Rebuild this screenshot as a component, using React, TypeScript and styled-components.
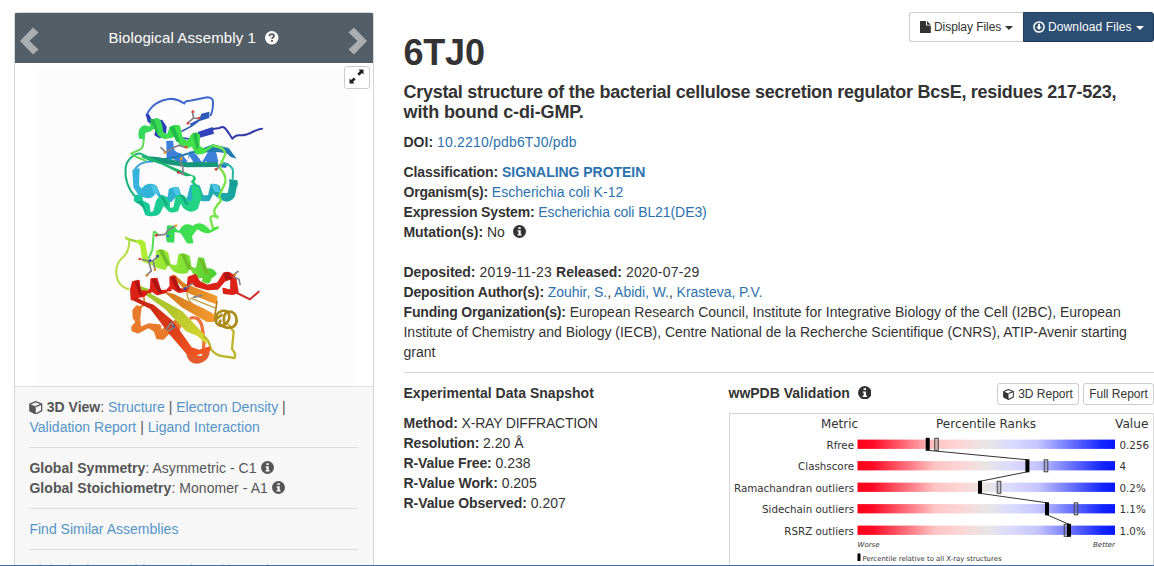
import React from 'react';
import styled, { createGlobalStyle } from 'styled-components';

const Global = createGlobalStyle`
  * { box-sizing: border-box; }
  html, body { margin: 0; padding: 0; }
  body {
    background: #fff;
    color: #333;
    font: 14px/20px "Liberation Sans", Arial, sans-serif;
    overflow: hidden;
  }
  svg { display: block; }
`;

const Page = styled.div`
  display: flex;
  width: 1154px;
  height: 566px;
  overflow: hidden;
  border-bottom: 1px solid #3f73a6;
`;

const Panel = styled.section`
  width: 360px;
  height: 640px;
  margin: 12px 0 0 14px;
  flex: none;
  border: 1px solid #d5d5d5;
  border-radius: 4px 4px 0 0;
`;

const PanelHeader = styled.header`
  display: flex;
  align-items: center;
  justify-content: space-between;
  height: 50px;
  padding: 0 6px 0 5px;
  background: #545e66;
  color: #fff;
`;

const PanelTitle = styled.div`
  display: flex;
  align-items: center;
  gap: 9px;
  font-size: 15px;
  letter-spacing: 0.12px;
`;

const ArrowButton = styled.span`
  padding-top: 6px;
`;

const Figure = styled.div`
  position: relative;
  height: 323px;
  padding: 5px 0 0 20px;
`;

const ExpandButton = styled.span`
  position: absolute;
  top: 3px;
  right: 3px;
  width: 26px;
  height: 23px;
  display: grid;
  place-items: center;
  background: #fff;
  border: 1px solid #ccc;
  border-radius: 3px;
`;

const PanelFooter = styled.footer`
  height: 265px;
  padding: 10px 15px 10px 14.4px;
  border-top: 1px solid #ddd;
  background: #f7f7f7;
  color: #555;
`;

const PanelRule = styled.hr`
  height: 1px;
  margin: 10px 0;
  border: 0;
  background: #ddd;
`;

const Line = styled.div<{ $faint?: boolean; $track?: number }>`
  white-space: nowrap;
  letter-spacing: ${(p) => p.$track ?? 0}px;
  ${(p) => p.$faint && 'color: #c4c4c4;'}
`;

const Label = styled.strong<{ $track?: number }>`
  letter-spacing: ${(p) => p.$track ?? 0}px;
`;

const Link = styled.a<{ $soft?: boolean; $track?: number }>`
  color: ${(p) => (p.$soft ? '#5594c8' : '#2d72ae')};
  text-decoration: none;
  ${(p) => p.$track !== undefined && `letter-spacing: ${p.$track}px;`}
`;

const Inline = styled.span<{ $gap?: number; $lift?: number }>`
  display: inline-block;
  vertical-align: ${(p) => p.$lift ?? -1}px;
  margin-left: ${(p) => p.$gap ?? 0}px;
`;

const Main = styled.main`
  width: 750.5px;
  flex: none;
  margin-left: 29.5px;
  padding-top: 12px;
`;

const ButtonBar = styled.div`
  display: flex;
  justify-content: flex-end;
  height: 30px;
`;

const FileButton = styled.span<{ $primary?: boolean }>`
  display: flex;
  align-items: center;
  height: 30px;
  width: ${(p) => (p.$primary ? 131 : 114)}px;
  padding-left: ${(p) => (p.$primary ? 9 : 10)}px;
  border: 1px solid ${(p) => (p.$primary ? '#1c3a59' : '#ccc')};
  border-right-width: ${(p) => (p.$primary ? 1 : 0)}px;
  border-radius: ${(p) => (p.$primary ? '0 3px 3px 0' : '3px 0 0 3px')};
  background: ${(p) => (p.$primary ? '#2c4e72' : '#fff')};
  color: ${(p) => (p.$primary ? '#fff' : '#333')};
  font-size: 12px;
  letter-spacing: ${(p) => (p.$primary ? 0.12 : -0.06)}px;
  white-space: nowrap;
`;

const FileLabel = styled.span`
  margin: 0 4px 0 3px;
`;

const Caret = styled.i`
  border: 4px solid transparent;
  border-top-color: currentColor;
  border-bottom: 0;
  margin-top: 2px;
`;

const EntryId = styled.h1`
  margin: -8px 0 0;
  font-size: 36px;
  line-height: 38px;
  letter-spacing: -0.2px;
`;

const EntryTitle = styled.h4`
  margin: 10px 0 0;
  font-size: 18px;
  line-height: 20px;
  font-weight: bold;
`;

const Block = styled.div<{ $top: number }>`
  margin-top: ${(p) => p.$top}px;
`;

const MainRule = styled.hr`
  height: 1px;
  margin: 10px 0 0;
  border: 0;
  background: #d8d8d8;
`;

const Columns = styled.div`
  display: flex;
`;

const Snapshot = styled.div`
  width: 325px;
  padding-top: 10px;
`;

const Validation = styled.div`
  flex: 1;
  padding-top: 10px;
`;

const ValidationHead = styled.div`
  display: flex;
  align-items: center;
  height: 22px;
  margin-bottom: 8px;
  gap: 4px;
`;

const ValidationTitle = styled.strong`
  flex: 1;
  margin-top: -2px;
`;

const ReportButton = styled.span<{ $width: number }>`
  display: flex;
  align-items: center;
  justify-content: center;
  gap: 4px;
  width: ${(p) => p.$width}px;
  height: 22px;
  border: 1px solid #ccc;
  border-radius: 3px;
  font-size: 12px;
  white-space: nowrap;
`;

const ChartFrame = styled.div`
  height: 170px;
  border: 1px solid #d5d5d5;
`;

const InfoIcon = ({ mark = 'i', size = 13 }: { mark?: 'i' | '?'; size?: number }) => (
  <svg width={size} height={size} viewBox="0 0 13 13">
    <circle cx="6.5" cy="6.5" r="6.5" fill="currentColor" />
    {mark === 'i' ? (
      <path d="M5.4 2.2h2.3v1.7H5.4zM4.6 5.2h3.1v4h.9v1.4H4.5V9.2h1V6.5h-.9z" fill="#fff" />
    ) : (
      <>
        <path d="M4.3 5.1C4.3 3.6 5.2 3 6.6 3c1.3 0 2.1.7 2.1 1.7 0 1.4-1.9 1.3-1.9 3" fill="none" stroke="#545e66" strokeWidth="1.8" />
        <path d="M5.8 8.7h1.9v1.7H5.8z" fill="#545e66" />
      </>
    )}
  </svg>
);

const CubeIcon = ({ size = 13 }: { size?: number }) => (
  <svg width={size} height={size} viewBox="0 0 13 13">
    <path d="M6.5 .6 12.2 3v6.5L6.5 12.4.8 9.5V3z" fill="none" stroke="currentColor" strokeWidth="1.2" strokeLinejoin="round" />
    <path d="M.8 3 6.5 5.4V12.4L.8 9.5z" fill="currentColor" />
    <path d="M6.5 5.4 12.2 3" stroke="currentColor" strokeWidth="1.2" />
  </svg>
);

const Chevron = ({ right }: { right?: boolean }) => (
  <svg width="19" height="28" viewBox="0 0 19 28">
    <path
      d={right ? 'M6 .5 19 14 6 27.5.5 22.5 9.5 14 .5 5.5z' : 'M13 .5 0 14 13 27.5l5.5-5L9.5 14l9-8.5z'}
      fill="#a9aeb2"
    />
  </svg>
);

const FileIcon = () => (
  <svg width="11" height="12" viewBox="0 0 11 12">
    <path d="M0 0h6v4.5h4.8V12H0z M7 0l3.8 3.7H7z" fill="currentColor" />
  </svg>
);

const DownloadIcon = () => (
  <svg width="12" height="12" viewBox="0 0 12 12">
    <circle cx="6" cy="6" r="5.1" fill="none" stroke="#fff" strokeWidth="1.5" />
    <path d="M5 2.8h2v3h1.9L6 9 3.1 5.8H5z" fill="#fff" />
  </svg>
);

const ExpandIcon = () => (
  <svg width="15" height="15" viewBox="0 0 15 15" transform="translate(-1 -1)">
    <path d="M9.5.5h5v5L13 4l-2.8 2.7-1.9-1.9L11 2zM.5 9.5v5h5L4 13l2.7-2.7-1.9-1.9L2 11z" fill="#222" />
  </svg>
);

const Sticks = ({ d, tips }: { d: string; tips: [number, number, string][] }) => (
  <>
    <path d={d} stroke="#858087" strokeWidth="5" fill="none" strokeLinejoin="round" />
    {tips.map(([x, y, c], i) => (
      <circle key={i} cx={x} cy={y} r="4" fill={c} />
    ))}
  </>
);

const Ribbon = ({ d, paint }: { d: string; paint: string }) => (
  <path d={d} fill={paint} stroke={paint} strokeWidth="6" />
);

/* Rainbow-coloured ribbon drawing, blue at the N terminus and red at the C terminus. */
const Protein = () => (
  <svg width="318" height="317" viewBox="35 68 318 317">
    <defs>
      <linearGradient id="cyan" x1="0" x2="1"><stop offset="0" stopColor="#35b4dd" /><stop offset=".55" stopColor="#2bb2c8" /><stop offset="1" stopColor="#16a39a" /></linearGradient>
      <linearGradient id="teal" x1="0" x2="1"><stop offset="0" stopColor="#19c79c" /><stop offset="1" stopColor="#23d583" /></linearGradient>
      <linearGradient id="green" x1="0" x2="1"><stop offset="0" stopColor="#35d95b" /><stop offset="1" stopColor="#48e443" /></linearGradient>
      <linearGradient id="lime" x1="0" x2="1"><stop offset="0" stopColor="#b5ee32" /><stop offset=".6" stopColor="#83e236" /><stop offset="1" stopColor="#4bcf35" /></linearGradient>
      <linearGradient id="orange" x1="0" x2="1"><stop offset="0" stopColor="#cf7a1c" /><stop offset="1" stopColor="#f49a2e" /></linearGradient>
      <linearGradient id="flame" x1="0" y1="0" x2="1" y2="1"><stop offset="0" stopColor="#c31c10" /><stop offset="1" stopColor="#f45a22" /></linearGradient>
      <linearGradient id="olive" x1="0" y1="0" x2="1" y2="1"><stop offset="0" stopColor="#8fc72b" /><stop offset=".5" stopColor="#b5c62c" /><stop offset="1" stopColor="#d9da30" /></linearGradient>
    </defs>
    <rect x="35" y="68" width="318" height="317" fill="#fcfcfc" />

    <g transform="translate(110 85) scale(.33333)" strokeLinejoin="round" strokeLinecap="round">
      <path d="M110 92C120 62 150 43 185 41Q205 43 223 55Q225 47 240 47L292 37Q308 38 309 50Q310 74 302 91" fill="none" stroke="#4169cd" strokeWidth="6" />
      <path d="M107 87 117 88 124 101 157 105 170 125 168 154 148 160 133 151 137 128 113 110z" fill="#2c3fba" />
      <path d="M213 137 242 122 240 116 268 102 274 86 298 80 298 99 269 108 246 125 215 142z" fill="#2c5ab6" />
      <path d="M309 132 329 129C343 118 350 136 367 161C376 154 376 148 391 151C419 153 431 133 456 131" fill="none" stroke="#3539aa" strokeWidth="6" />
      <path d="M211 158 245 163" stroke="#3844c0" strokeWidth="5" />
      <path d="M263 141 308 126 312 146 267 159z" fill="#3341bb" />
      <Ribbon paint="#4a8ee6" d="M171 171 187 170 190 201 210 209 228 231 M176 225 200 236 222 234" />
      <path d="M169 168 187 167 192 201 213 205 232 228 239 198 258 207 276 232 292 204 315 186 325 230 304 241 287 229 273 240 253 236 239 214 226 237 202 238 190 220 170 235z" fill="#3d80da" />
      <path d="M217 208 278 190 309 178 356 189 380 221 362 216 350 205 320 201 252 204 187 223 123 228z" fill="#237bb3" />
      <path d="M72 258C80 243 88 235 108 231L184 223" fill="none" stroke="#379fd5" strokeWidth="6" />
      <path d="M324 239 342 232 356 235 347 249 332 247" fill="#2c72ca" />
      <Ribbon paint="url(#cyan)" d="M70 257 86 253 84 302 95 316 Q105 299 120 299 Q136 299 140 309 L148 329 Q162 341 176 338 L179 314Q192 306 204 310L213 337Q224 347 233 342L243 303Q256 298 267 304L277 332Q288 336 297 332L304 300Q316 297 326 304L333 325Q345 329 356 325L363 290Q373 290 380 293L372 333Q363 347 350 347Q335 347 309 322L297 345Q285 347 273 345L258 326Q248 350 230 350Q213 350 199 329L183 348Q170 351 158 348L137 319Q128 337 115 337L90 332 73 306z" />
      <path d="M122 299 140 304 147 328 131 324zM187 307 206 307 211 333 196 330zM303 296 324 300 331 322 314 320z" fill="#4bc4e5" />
      <path d="M357 283 382 286 383 302 361 306z" fill="#159d92" />
      <path d="M341 236Q366 238 369 258L368 286" fill="none" stroke="#26b5a2" strokeWidth="6" />
      <path d="M78 338C51 309 44 277 47 248C50 222 75 204 92 206L112 216" fill="none" stroke="#21b481" strokeWidth="6" />
      <path d="M92 212 142 216 226 232 323 231 325 246 229 247 170 238 118 227z" fill="#15967b" />
      <path d="M104 211 139 225 251 272 227 274 156 239 96 218z" fill="#1bb76b" />
      <path d="M251 275Q258 281 247 290C259 303 273 314 271 338L258 350" fill="none" stroke="#20c875" strokeWidth="8" />
      <Ribbon paint="url(#teal)" d="M77 332 92 333 98 350Q110 353 116 360L119 384Q131 383 133 378L141 348Q150 333 160 334Q172 339 177 356L177 370Q186 373 193 368L199 337Q205 330 216 332Q229 338 235 354L250 347 248 305 262 309Q270 324 270 342L261 370Q252 378 241 377Q230 375 222 367L211 349 202 376Q190 382 179 378L160 358 148 383Q139 391 131 390Q118 392 108 388L99 361Q91 353 81 352L74 346z" />
      <path d="M79 349 97 348 110 385 99 368zM150 333 160 334 175 361 167 362zM209 329 219 330 236 357 228 360z" fill="#11ab82" />
      <path d="M101 155Q102 187 91 193L64 205Q66 211 106 227" fill="none" stroke="#60da52" strokeWidth="6" />
      <Ribbon paint="url(#green)" d="M89 158Q85 127 104 124L122 129Q121 106 139 102Q154 102 156 141L172 153 182 128Q195 118 208 125L215 158 233 172 246 150Q259 141 267 151L266 184 284 195 311 180 279 204Q268 206 260 205L246 181Q236 189 229 186Q216 184 211 178L194 150 185 156 164 159 148 151 133 127 119 137 103 142 101 160z" />
      <path d="M118 103 133 102 147 146 137 139zM178 126 193 124 210 170 199 170zM248 145 260 143 267 184 260 196z" fill="#24bb4c" />
      <path d="M312 183Q345 187 346 207L328 248Q350 270 346 292L327 335Q339 347 324 357L313 374Q311 389 323 397Q303 389 301 399L309 431L324 427" fill="none" stroke="#78e44a" strokeWidth="7" />
      <Sticks d="M247 81 251 99 266 101M251 99 234 114M153 188 167 202 194 187 206 181 230 187M215 215 211 235 218 244 220 268 205 262M331 238 319 254" tips={[[249, 80, '#d64538'], [267, 99, '#e24033'], [234, 115, '#e24033'], [228, 187, '#ed4f24'], [165, 203, '#e89727'], [214, 221, '#e89727'], [205, 262, '#c82e2a'], [318, 253, '#d24236']]} />
    </g>

    <g transform="translate(110 220) scale(.33333)" strokeLinejoin="round" strokeLinecap="round">
      <path d="M143 43Q130 27 131 43L127 90L116 115" fill="none" stroke="#53df51" strokeWidth="6" />
      <Ribbon paint="url(#green)" d="M171 54 174 19 191 20Q200 35 209 35Q218 17 230 16Q240 15 249 21Q258 13 267 13Q284 14 299 34L322 24 296 37Q285 37 280 34Q270 28 261 24L243 48 247 67Q239 69 232 66L215 38Q204 33 191 34L190 65 173 64z" />
      <path d="M50 56 81 65" stroke="#9dce37" strokeWidth="7" />
      <path d="M47 52 58 61Q58 99 35 115C10 140 12 196 55 208" fill="none" stroke="#b7dc42" strokeWidth="6" />
      <Ribbon paint="url(#lime)" d="M81 64Q94 57 103 68L112 120 138 129 141 94Q157 86 172 99L180 136 202 139 208 105Q223 98 237 111L242 143 260 147 267 115 280 117 288 148Q310 145 317 162L301 175Q300 186 292 188L279 183 281 171 259 171 239 140 230 157Q220 159 212 158 198 156 192 152L174 130 165 147 139 140 120 130 100 123 93 76z" />
      <path d="M145 89 158 90 181 135 170 137zM212 101 224 103 246 148 234 149zM265 115 277 117 300 165 286 162z" fill="#71bd29" />
      <path d="M231 218Q230 239 251 255L284 269 297 301M241 234 313 263" fill="none" stroke="#bd9a32" strokeWidth="4" />
      <path d="M180 173Q183 162 195 165L223 190 322 229 320 253 302 247 232 218 204 188z" fill="url(#orange)" />
      <path d="M321 244 312 303" stroke="#b37b1c" strokeWidth="5" />
      <path d="M160 214 192 222 307 279 315 289 309 306 291 306 215 262z" fill="url(#orange)" />
      <path d="M102 235Q107 259 88 262" fill="none" stroke="#df8135" strokeWidth="6" />
      <Ribbon paint="#e87b2b" d="M80 259 92 262 88 293 90 324 116 313 149 316 154 336 165 323 186 309 211 294 216 310 205 330 184 331 160 356 142 355 134 333 115 321 84 338 67 331 67 321 80 306 71 294 70 271z" />
      <path d="M243 294Q267 287 276 319L282 359 280 403" fill="none" stroke="#eb733b" strokeWidth="10" />
      <path d="M59 207 82 195 116 207 125 223 217 274 285 346 292 374 262 348 228 334 165 267 103 222z" fill="url(#olive)" />
      <path d="M283 350Q297 358 302 386Q316 407 341 409L374 414Q379 402 366 387L371 335 356 315" fill="none" stroke="#bdb62a" strokeWidth="7" />
      <path d="M319 302Q314 280 335 273Q357 268 358 293Q353 316 331 317Q313 310 319 297L335 285M343 310Q338 286 350 276Q378 270 380 302Q378 326 350 323Q322 317 331 302" fill="none" stroke="#ad8a17" strokeWidth="8" />
      <path d="M231 390Q225 412 244 427Q264 438 289 419Q303 403 298 382L276 388 279 406Q260 413 249 394z" fill="#e55b2d" />
      <path d="M66 224 101 244 131 254 190 304 245 382 267 389 300 379 301 393 260 406 229 401 177 341 121 267 68 241z" fill="url(#flame)" />
      <Ribbon paint="#dc2117" d="M65 238 63 209 69 186 86 182 90 213 122 216 124 178 140 176 151 213 182 211 181 172 195 171 205 207 232 209 236 172 256 165 268 186 292 197 324 190 342 160Q360 153 376 174L383 217Q370 223 366 222L342 219 340 206 363 212 364 176 344 182 323 206 293 208 258 198 243 185 230 212 206 216 181 200 166 217 142 223 121 208 101 229 75 232z" />
      <path d="M74 183 84 183 98 228 87 222zM123 176 136 176 158 219 145 218zM181 171 193 171 215 213 201 211zM341 159 356 157 367 177 346 180z" fill="#ad1515" />
      <path d="M381 219 420 238 446 215" fill="none" stroke="#cf2929" strokeWidth="6" />
      <Sticks d="M138 46 166 43 174 31 195 18M89 117 116 123 130 121 145 108M116 124 124 153 109 166M130 125 135 150M222 207 247 191M250 232 275 226M372 163 384 154M371 171 387 178 390 193M169 329 184 306 193 321 177 332" tips={[[139, 46, '#e82834'], [173, 48, '#4968d4'], [198, 17, '#eba02f'], [89, 117, '#e0433c'], [120, 122, '#3549b5'], [143, 108, '#3549b5'], [135, 149, '#e38e2b'], [111, 166, '#dc8731'], [225, 206, '#313cae'], [375, 164, '#d38c29'], [180, 305, '#c62e21'], [191, 319, '#4d5a96'], [173, 334, '#d97725']]} />
    </g>
  </svg>
);

const metrics = [
  { label: 'Rfree', value: '0.256', all: 927.7, similar: 936.5 },
  { label: 'Clashscore', value: '4', all: 1027.4, similar: 1046 },
  { label: 'Ramachandran outliers', value: '0.2%', all: 980, similar: 999 },
  { label: 'Sidechain outliers', value: '1.1%', all: 1047, similar: 1076 },
  { label: 'RSRZ outliers', value: '1.0%', all: 1069, similar: 1066 },
];

const ValidationChart = () => (
  <svg width="423" height="152" viewBox="730 414 423 152" fontFamily="'DejaVu Sans', sans-serif" fill="#333">
    <defs>
      <linearGradient id="rank">
        <stop offset="0" stopColor="#ff0018" />
        <stop offset=".06" stopColor="#ff0b25" />
        <stop offset=".3" stopColor="#ffc4c4" />
        <stop offset=".4" stopColor="#fdd5d5" />
        <stop offset=".5" stopColor="#e9e5e5" />
        <stop offset=".6" stopColor="#dadaff" />
        <stop offset=".7" stopColor="#c5c5ff" />
        <stop offset=".95" stopColor="#1425ff" />
        <stop offset="1" stopColor="#0716ff" />
      </linearGradient>
    </defs>
    <text x="821" y="428" fontSize="12" textLength="37" lengthAdjust="spacingAndGlyphs">Metric</text>
    <text x="936" y="428" fontSize="12" textLength="100" lengthAdjust="spacingAndGlyphs">Percentile Ranks</text>
    <text x="1115" y="428" fontSize="12" textLength="33.5" lengthAdjust="spacingAndGlyphs">Value</text>
    {metrics.map((m, i) => {
      const y = 444.3 + i * 21.5;
      const next = metrics[i + 1];
      return (
        <g key={m.label}>
          <text x="854" y={y + 4.5} fontSize="10.3" textAnchor="end">{m.label}</text>
          <rect x="857.5" y={y - 4.7} width="257.5" height="9.3" fill="url(#rank)" />
          <text x="1119.5" y={y + 4.5} fontSize="10.3">{m.value}</text>
          <rect x={m.similar - 1.8} y={y - 6} width="3.6" height="12" fill="#888" fillOpacity=".35" stroke="#444" strokeWidth="1" />
          <rect x={m.all - 2} y={y - 6.5} width="4" height="13" fill="#000" />
          {next && <path d={`M${m.all} ${y + 6}L${next.all} ${y + 15.5}`} stroke="#333" strokeWidth="1" />}
        </g>
      );
    })}
    <g fontSize="6.9">
      <text x="857.5" y="547" fontStyle="italic" textLength="22" lengthAdjust="spacingAndGlyphs">Worse</text>
      <text x="1093" y="547" fontStyle="italic" textLength="22" lengthAdjust="spacingAndGlyphs">Better</text>
      <rect x="857.5" y="553.5" width="3" height="7.5" fill="#000" />
      <text x="862.5" y="560.7" textLength="139" lengthAdjust="spacingAndGlyphs">Percentile relative to all X-ray structures</text>
    </g>
  </svg>
);

export default function App() {
  return (
    <>
      <Global />
      <Page>
        <Panel>
          <PanelHeader>
            <ArrowButton><Chevron /></ArrowButton>
            <PanelTitle>Biological Assembly 1 <InfoIcon mark="?" size={13.5} /></PanelTitle>
            <ArrowButton><Chevron right /></ArrowButton>
          </PanelHeader>
          <Figure>
            <Protein />
            <ExpandButton><ExpandIcon /></ExpandButton>
          </Figure>
          <PanelFooter>
            <Line>
              <Inline $lift={-2}><CubeIcon size={13.5} /></Inline> <strong>3D View</strong>: <Link $soft>Structure</Link> | <Link $soft>Electron Density</Link> |
            </Line>
            <Line><Link $soft $track={0.03}>Validation Report</Link> | <Link $soft $track={0.05}>Ligand Interaction</Link></Line>
            <PanelRule />
            <Line $track={0.05}><strong>Global Symmetry</strong>: Asymmetric - C1 <Inline><InfoIcon /></Inline></Line>
            <Line $track={0.06}><strong>Global Stoichiometry</strong>: Monomer - A1 <Inline><InfoIcon /></Inline></Line>
            <PanelRule />
            <Line><Link $soft $track={0.02}>Find Similar Assemblies</Link></Line>
            <PanelRule />
            <Line $faint>Biological assembly 1 assigned by authors</Line>
          </PanelFooter>
        </Panel>
        <Main>
          <ButtonBar>
            <FileButton><FileIcon /><FileLabel>Display Files</FileLabel><Caret /></FileButton>
            <FileButton $primary><DownloadIcon /><FileLabel>Download Files</FileLabel><Caret /></FileButton>
          </ButtonBar>
          <EntryId>6TJ0</EntryId>
          <EntryTitle>
            <Line $track={-0.28}>Crystal structure of the bacterial cellulose secretion regulator BcsE, residues 217-523,</Line>
            <Line $track={-0.12}>with bound c-di-GMP.</Line>
          </EntryTitle>
          <Block $top={10}><Label>DOI:</Label> <Link $track={0.19}>10.2210/pdb6TJ0/pdb</Link></Block>
          <Block $top={10}>
            <Line><Label $track={-0.07}>Classification:</Label> <Link $track={-0.04}><strong>SIGNALING PROTEIN</strong></Link></Line>
            <Line><Label $track={-0.23}>Organism(s):</Label> <Link $track={0.04}>Escherichia coli K-12</Link></Line>
            <Line><Label $track={-0.16}>Expression System:</Label> <Link $track={-0.08}>Escherichia coli BL21(DE3)</Link></Line>
            <Line><Label $track={-0.05}>Mutation(s):</Label> No <Inline $gap={4}><InfoIcon /></Inline></Line>
          </Block>
          <Block $top={20}>
            <Line $track={0.2}><Label $track={-0.05}>Deposited:</Label> 2019-11-23 <Label $track={-0.05}>Released:</Label> 2020-07-29</Line>
            <Line $track={-0.05}>
              <Label $track={-0.14}>Deposition Author(s):</Label> <Link>Zouhir, S.</Link>, <Link>Abidi, W.</Link>, <Link>Krasteva, P.V.</Link>
            </Line>
            <Line><Label $track={-0.17}>Funding Organization(s):</Label> European Research Council, Institute for Integrative Biology of the Cell (I2BC), European</Line>
            <Line $track={-0.018}>Institute of Chemistry and Biology (IECB), Centre National de la Recherche Scientifique (CNRS), ATIP-Avenir starting</Line>
            <Line>grant</Line>
          </Block>
          <MainRule />
          <Columns>
            <Snapshot>
              <Label $track={0.02}>Experimental Data Snapshot</Label>
              <Block $top={10}>
                <Line $track={-0.21}><Label>Method:</Label> X-RAY DIFFRACTION</Line>
                <Line><Label $track={-0.12}>Resolution:</Label> 2.20 Å</Line>
                <Line><Label $track={-0.1}>R-Value Free:</Label> 0.238</Line>
                <Line><Label $track={-0.03}>R-Value Work:</Label> 0.205</Line>
                <Line><Label $track={-0.07}>R-Value Observed:</Label> 0.207</Line>
              </Block>
            </Snapshot>
            <Validation>
              <ValidationHead>
                <ValidationTitle>wwPDB Validation <Inline $gap={4}><InfoIcon size={13.5} /></Inline></ValidationTitle>
                <ReportButton $width={82}><CubeIcon size={11} />3D Report</ReportButton>
                <ReportButton $width={71}>Full Report</ReportButton>
              </ValidationHead>
              <ChartFrame><ValidationChart /></ChartFrame>
            </Validation>
          </Columns>
        </Main>
      </Page>
    </>
  );
}
